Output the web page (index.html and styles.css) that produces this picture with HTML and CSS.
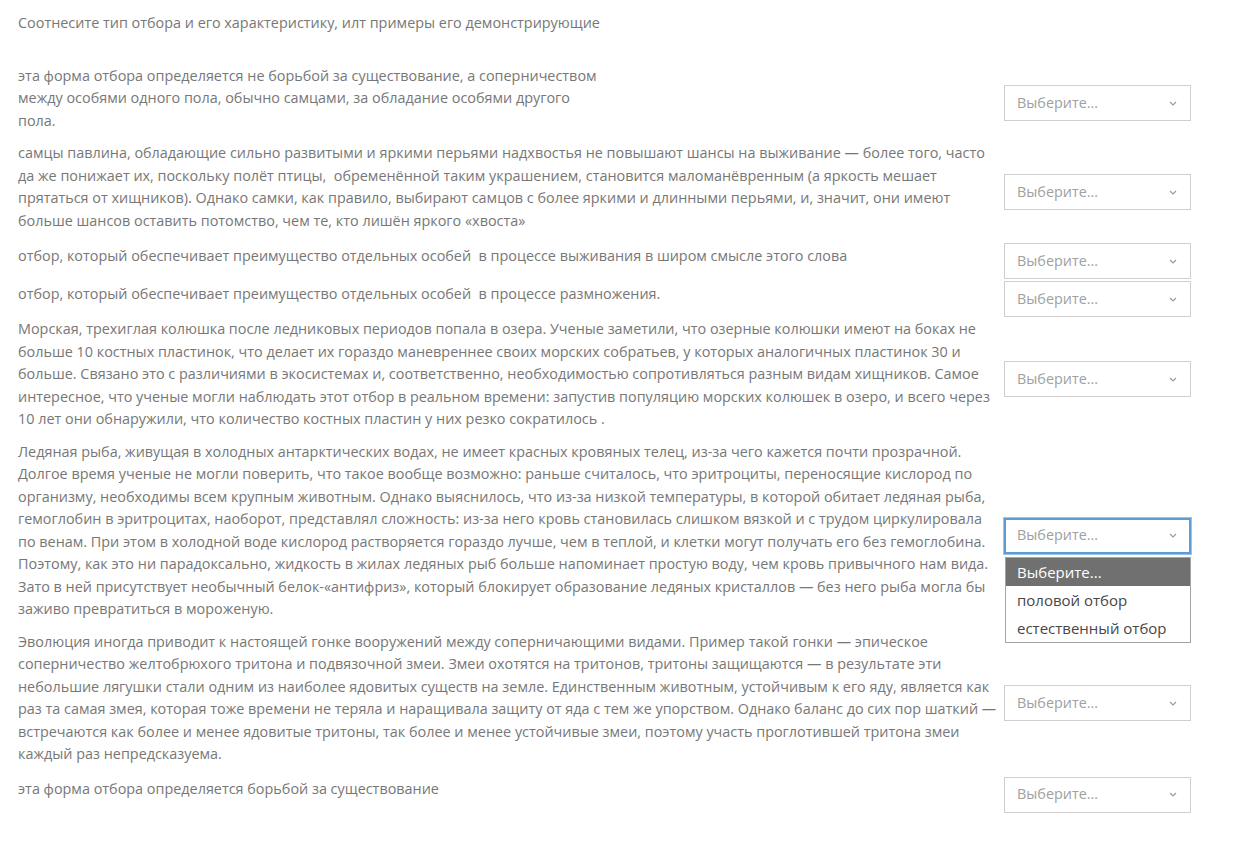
FILE: index.html
```html
<!DOCTYPE html>
<html lang="ru">
<head>
<meta charset="utf-8">
<title>Соотнесите тип отбора</title>
<link rel="stylesheet" href="styles.css">
</head>
<body>
<div class="page">
  <p class="title">Соотнесите тип отбора и его характеристику, илт примеры его демонстрирующие</p>

  <div class="row">
    <p class="q">эта форма отбора определяется не борьбой за существование, а соперничеством<br>между особями одного пола, обычно самцами, за обладание особями другого<br>пола.</p>
    <div class="field"><div class="select"><span>Выберите...</span><svg class="chev" width="8" height="5" viewBox="0 0 8 5"><path d="M1 1l3 3 3-3" fill="none" stroke="#9a9a9a" stroke-width="1.2"/></svg></div></div>
  </div>

  <div class="row">
    <p class="q">самцы павлина, обладающие сильно развитыми и яркими перьями надхвостья не повышают шансы на выживание — более того, часто<br>да же понижает их, поскольку полёт птицы,&nbsp; обременённой таким украшением, становится маломанёвренным (а яркость мешает<br>прятаться от хищников). Однако самки, как правило, выбирают самцов с более яркими и длинными перьями, и, значит, они имеют<br>больше шансов оставить потомство, чем те, кто лишён яркого «хвоста»</p>
    <div class="field"><div class="select"><span>Выберите...</span><svg class="chev" width="8" height="5" viewBox="0 0 8 5"><path d="M1 1l3 3 3-3" fill="none" stroke="#9a9a9a" stroke-width="1.2"/></svg></div></div>
  </div>

  <div class="row">
    <p class="q">отбор, который обеспечивает преимущество отдельных особей&nbsp; в процессе выживания в широм смысле этого слова</p>
    <div class="field"><div class="select"><span>Выберите...</span><svg class="chev" width="8" height="5" viewBox="0 0 8 5"><path d="M1 1l3 3 3-3" fill="none" stroke="#9a9a9a" stroke-width="1.2"/></svg></div></div>
  </div>

  <div class="row">
    <p class="q">отбор, который обеспечивает преимущество отдельных особей&nbsp; в процессе размножения.</p>
    <div class="field"><div class="select"><span>Выберите...</span><svg class="chev" width="8" height="5" viewBox="0 0 8 5"><path d="M1 1l3 3 3-3" fill="none" stroke="#9a9a9a" stroke-width="1.2"/></svg></div></div>
  </div>

  <div class="row">
    <p class="q">Морская, трехиглая колюшка после ледниковых периодов попала в озера. Ученые заметили, что озерные колюшки имеют на боках не<br>больше 10 костных пластинок, что делает их гораздо маневреннее своих морских собратьев, у которых аналогичных пластинок 30 и<br>больше. Связано это с различиями в экосистемах и, соответственно, необходимостью сопротивляться разным видам хищников. Самое<br>интересное, что ученые могли наблюдать этот отбор в реальном времени: запустив популяцию морских колюшек в озеро, и всего через<br>10 лет они обнаружили, что количество костных пластин у них резко сократилось .</p>
    <div class="field"><div class="select"><span>Выберите...</span><svg class="chev" width="8" height="5" viewBox="0 0 8 5"><path d="M1 1l3 3 3-3" fill="none" stroke="#9a9a9a" stroke-width="1.2"/></svg></div></div>
  </div>

  <div class="row">
    <p class="q">Ледяная рыба, живущая в холодных антарктических водах, не имеет красных кровяных телец, из-за чего кажется почти прозрачной.<br>Долгое время ученые не могли поверить, что такое вообще возможно: раньше считалось, что эритроциты, переносящие кислород по<br>организму, необходимы всем крупным животным. Однако выяснилось, что из-за низкой температуры, в которой обитает ледяная рыба,<br>гемоглобин в эритроцитах, наоборот, представлял сложность: из-за него кровь становилась слишком вязкой и с трудом циркулировала<br>по венам. При этом в холодной воде кислород растворяется гораздо лучше, чем в теплой, и клетки могут получать его без гемоглобина.<br>Поэтому, как это ни парадоксально, жидкость в жилах ледяных рыб больше напоминает простую воду, чем кровь привычного нам вида.<br>Зато в ней присутствует необычный белок-«антифриз», который блокирует образование ледяных кристаллов — без него рыба могла бы<br>заживо превратиться в мороженую.</p>
    <div class="field">
      <div class="select focused"><span>Выберите...</span><svg class="chev" width="8" height="5" viewBox="0 0 8 5"><path d="M1 1l3 3 3-3" fill="none" stroke="#9a9a9a" stroke-width="1.2"/></svg></div>
      <ul class="menu">
        <li class="opt active">Выберите...</li>
        <li class="opt">половой отбор</li>
        <li class="opt">естественный отбор</li>
      </ul>
    </div>
  </div>

  <div class="row">
    <p class="q">Эволюция иногда приводит к настоящей гонке вооружений между соперничающими видами. Пример такой гонки — эпическое<br>соперничество желтобрюхого тритона и подвязочной змеи. Змеи охотятся на тритонов, тритоны защищаются — в результате эти<br>небольшие лягушки стали одним из наиболее ядовитых существ на земле. Единственным животным, устойчивым к его яду, является как<br>раз та самая змея, которая тоже времени не теряла и наращивала защиту от яда с тем же упорством. Однако баланс до сих пор шаткий —<br>встречаются как более и менее ядовитые тритоны, так более и менее устойчивые змеи, поэтому участь проглотившей тритона змеи<br>каждый раз непредсказуема.</p>
    <div class="field"><div class="select"><span>Выберите...</span><svg class="chev" width="8" height="5" viewBox="0 0 8 5"><path d="M1 1l3 3 3-3" fill="none" stroke="#9a9a9a" stroke-width="1.2"/></svg></div></div>
  </div>

  <div class="row">
    <p class="q">эта форма отбора определяется борьбой за существование</p>
    <div class="field"><div class="select"><span>Выберите...</span><svg class="chev" width="8" height="5" viewBox="0 0 8 5"><path d="M1 1l3 3 3-3" fill="none" stroke="#9a9a9a" stroke-width="1.2"/></svg></div></div>
  </div>
</div>
</body>
</html>
```
FILE: styles.css
```css
html, body {
  margin: 0;
  background: #fff;
}
body {
  font-family: "Open Sans", "Liberation Sans", sans-serif;
  font-size: 14.4px;
  line-height: 22.5px;
  color: #777;
}
.page {
  padding: 12px 0 0 18px;
}
.title {
  margin: 0 0 30px;
}
.row {
  display: flex;
  align-items: center;
}
.q {
  width: 982px;
  flex: none;
  margin: 0 0 10px;
}
.field {
  position: relative;
  width: 187px;
  flex: none;
  margin: 1px 0 1px 4px;
}
.select {
  box-sizing: border-box;
  height: 36px;
  border: 1px solid #cfcfcf;
  display: flex;
  align-items: center;
  justify-content: space-between;
  padding: 0 13px 0 12px;
  color: #a0a0a0;
  background: #fff;
}
.select.focused {
  border: 2px solid #5b9bd6;
  box-shadow: 0 0 0 1px #9cc3ea;
  padding: 0 12px 0 11px;
}
.chev {
  display: block;
}
.menu {
  position: absolute;
  left: 1px;
  right: 0;
  top: calc(100% + 3px);
  margin: 0;
  padding: 0;
  list-style: none;
  background: #fff;
  border: 1px solid #a4a4a4;
  z-index: 2;
}
.opt {
  height: 28px;
  line-height: 28px;
  padding-left: 11px;
  font-size: 15px;
  color: #474747;
  white-space: nowrap;
}
.opt.active {
  background: #707070;
  color: #fff;
}
```
